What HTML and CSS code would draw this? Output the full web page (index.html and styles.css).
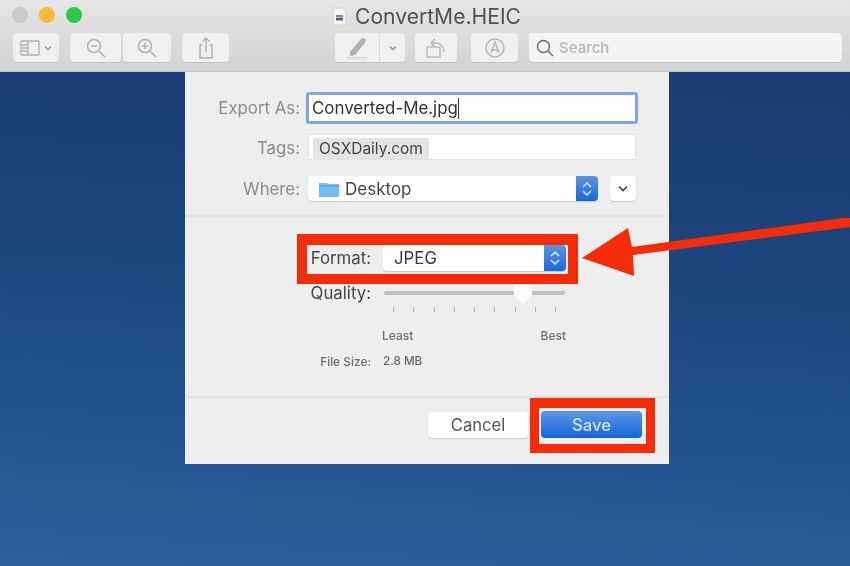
FILE: index.html
```html
<!DOCTYPE html>
<html lang="en">
<head>
<meta charset="utf-8">
<title>ConvertMe.HEIC</title>
<link rel="stylesheet" href="styles.css">
</head>
<body>
<div class="stage">
  <header class="chrome">
    <div class="titlebar">
      <div class="lights">
        <span class="light light-grey"></span>
        <span class="light light-yellow"></span>
        <span class="light light-green"></span>
      </div>
      <svg class="doc-icon" width="15" height="19" viewBox="0 0 15 19"><path d="M1 1h9l4 4v13H1z" fill="#f4f4f4" stroke="#d0d0d0"/><path d="M4 8h7v2.500H4z" fill="#7f8aa0"/><path d="M4 11h7v2.500H4z" fill="#5c6270"/></svg>
      <span class="title">ConvertMe.HEIC</span>
    </div>
    <div class="toolbar">
      <div class="tbtn tbtn-sidebar">
        <svg width="20" height="16" viewBox="0 0 20 16" fill="none" stroke="#b0b0b0" stroke-width="1.400"><rect x="1" y="1" width="18" height="14" rx="1"/><path d="M8 1v14M2 5h5M2 8h5M2 11h5"/></svg>
        <svg width="8" height="6" viewBox="0 0 8 6" fill="none" stroke="#9a9a9a" stroke-width="1.600"><path d="M1 1.500l3 3 3-3"/></svg>
      </div>
      <div class="tbtn tbtn-zoomout">
        <svg width="20" height="20" viewBox="0 0 20 20" fill="none" stroke="#b0b0b0" stroke-width="1.500"><circle cx="8" cy="8" r="6.500"/><path d="M5 8h6M13 13l6 6"/></svg>
      </div>
      <div class="tbtn tbtn-zoomin">
        <svg width="20" height="20" viewBox="0 0 20 20" fill="none" stroke="#b0b0b0" stroke-width="1.500"><circle cx="8" cy="8" r="6.500"/><path d="M5 8h6M8 5v6M13 13l6 6"/></svg>
      </div>
      <div class="tbtn tbtn-share">
        <svg width="16" height="22" viewBox="0 0 16 22" fill="none" stroke="#b0b0b0" stroke-width="1.400"><path d="M4.500 8H2v13h12V8h-2.500M8 15V1M4.500 4.500L8 1l3.500 3.500"/></svg>
      </div>
      <div class="tbtn tbtn-pen">
        <svg width="26" height="24" viewBox="0 0 26 24"><path d="M6 16L18 2l4 1-1 4-10 12-5 1z" fill="#b0b0b0"/><path d="M2 22h21" stroke="#c8c8c8"/></svg>
      </div>
      <div class="tbtn tbtn-penmenu">
        <svg width="8" height="6" viewBox="0 0 8 6" fill="none" stroke="#9a9a9a" stroke-width="1.600"><path d="M1 1.500l3 3 3-3"/></svg>
      </div>
      <div class="tbtn tbtn-rotate">
        <svg width="22" height="22" viewBox="0 0 22 22" fill="none" stroke="#b4b4b4" stroke-width="1.300"><rect x="2" y="10" width="13" height="10"/><path d="M19 15c0-5-3-9-8-9H7M10 2L6 6l4 4"/></svg>
      </div>
      <div class="tbtn tbtn-markup">
        <svg width="20" height="20" viewBox="0 0 20 20" fill="none" stroke="#b4b4b4" stroke-width="1.400"><circle cx="10" cy="10" r="9"/><path d="M6 15l4-11 4 11M6.500 14c0-3 7-3 7 0"/></svg>
      </div>
      <div class="search">
        <svg width="18" height="18" viewBox="0 0 18 18" fill="none" stroke="#6a6a6a" stroke-width="1.500"><circle cx="7.500" cy="7.500" r="6"/><path d="M12 12l5 5"/></svg>
        <span class="search-text">Search</span>
      </div>
    </div>
  </header>

  <main class="dialog">
    <div class="row row-export">
      <label class="label">Export As:</label>
      <div class="field field-focus"><span>Converted-Me.jpg</span><i class="caret"></i></div>
    </div>
    <div class="row row-tags">
      <label class="label label-tags">Tags:</label>
      <div class="field field-tags"><span class="tag">OSXDaily.com</span></div>
    </div>
    <div class="row row-where">
      <label class="label">Where:</label>
      <div class="popup popup-where">
        <svg class="folder" width="20" height="16" viewBox="0 0 20 16"><path d="M0 2h8l1 1h11v13H0z" fill="#72bdf5"/><path d="M0 5h20" stroke="#4f9fdc"/></svg>
        <span>Desktop</span>
        <span class="stepper">
          <svg width="10" height="16" viewBox="0 0 10 16" fill="none" stroke="#dbe9fb" stroke-width="1.500"><path d="M1 6l4-4 4 4M1 10l4 4 4-4"/></svg>
        </span>
      </div>
      <div class="expand">
        <svg width="10" height="7" viewBox="0 0 10 7" fill="none" stroke="#444" stroke-width="1.600"><path d="M1 1.500l4 4 4-4"/></svg>
      </div>
    </div>
    <hr class="divider divider-top">
    <div class="row row-format">
      <label class="label label-opt label-dark">Format:</label>
      <div class="popup popup-format">
        <span>JPEG</span>
        <span class="stepper">
          <svg width="10" height="16" viewBox="0 0 10 16" fill="none" stroke="#dbe9fb" stroke-width="1.500"><path d="M1 6l4-4 4 4M1 10l4 4 4-4"/></svg>
        </span>
      </div>
    </div>
    <div class="row row-quality">
      <label class="label label-opt label-dark">Quality:</label>
      <div class="slider">
        <div class="track"></div>
        <svg class="thumb" width="20" height="24" viewBox="0 0 20 24"><path d="M2 1h16a1 1 0 0 1 1 1v12l-9 9-9-9V2a1 1 0 0 1 1-1z" fill="#fbfbfb"/></svg>
      </div>
    </div>
    <div class="ticks">
      <i></i><i></i><i></i><i></i><i></i><i></i><i></i><i></i><i></i>
    </div>
    <div class="scale"><span>Least</span><span>Best</span></div>
    <div class="row row-size">
      <label class="label label-small">File Size:</label>
      <span class="size">2.8 MB</span>
    </div>
    <hr class="divider divider-bottom">
    <div class="actions">
      <button class="btn btn-cancel">Cancel</button>
      <button class="btn btn-save">Save</button>
    </div>
    <div class="mark mark-format"></div>
    <div class="mark mark-save"></div>
  </main>

  <svg class="arrow" width="270" height="70" viewBox="0 0 270 70"><path d="M2 40L48 10l4 19 218-30v10L53 37l1 21z" fill="#f52c0a"/></svg>
</div>
</body>
</html>
```
FILE: styles.css
```css
* { box-sizing: border-box; }
html, body { margin: 0; padding: 0; }
body { width: 850px; height: 566px; overflow: hidden; font-family: Inter, "Liberation Sans", sans-serif; }

.stage {
  position: relative;
  width: 850px;
  height: 566px;
  overflow: hidden;
  background: linear-gradient(184deg, #193a6c 0%, #1b4077 30%, #214d87 65%, #2e60a0 100%);
  filter: blur(0.5px);
}

.chrome {
  height: 72px;
  background: linear-gradient(180deg, #e6e6e6 0%, #d3d3d3 100%);
  border-bottom: 1px solid #c6c6c6;
  color: #555;
}
.titlebar { display: flex; align-items: center; height: 33px; padding-left: 12px; }
.lights { display: flex; gap: 11px; width: 320px; padding-bottom: 3px; }
.light { width: 16px; height: 16px; border-radius: 50%; }
.light-grey { background: #c9c9c9; }
.light-yellow { background: #f6bb3a; }
.light-green { background: #2dc84a; }
.doc-icon { margin-right: 8px; }
.title { font-size: 21.100px; color: #505050; }

.toolbar { display: flex; align-items: stretch; height: 29px; padding-left: 13px; }
.tbtn {
  display: flex;
  align-items: center;
  justify-content: center;
  gap: 4px;
  height: 29px;
  background: #f0f0f0;
  border-radius: 4px;
  box-shadow: 0 1px 0 #c4c4c4;
}
.tbtn-sidebar { width: 46px; margin-right: 11px; }
.tbtn-zoomout { width: 51px; margin-right: 2px; }
.tbtn-zoomin { width: 48px; margin-right: 11px; }
.tbtn-share { width: 47px; margin-right: 106px; }
.tbtn-pen { width: 44px; border-radius: 4px 0 0 4px; margin-right: 1px; }
.tbtn-penmenu { width: 25px; border-radius: 0 4px 4px 0; margin-right: 10px; }
.tbtn-rotate { width: 42px; margin-right: 14px; }
.tbtn-markup { width: 47px; margin-right: 11px; }
.search {
  display: flex;
  align-items: center;
  gap: 5px;
  width: 313px;
  padding-left: 7px;
  background: #f4f4f4;
  border-radius: 4px;
  box-shadow: 0 1px 0 #c4c4c4;
}
.search-text { font-size: 15px; color: #b5b5b5; font-weight: 500; }

.dialog {
  position: relative;
  width: 484px;
  height: 392px;
  margin-left: 185px;
  padding-top: 20px;
  background: #eeeeee;
  color: #8a8a8a;
}
.row { display: flex; align-items: center; }
.label { width: 115px; text-align: right; font-size: 16.800px; color: #8b8b8b; }
.label-tags { padding-top: 2px; }
.label-opt { width: 186px; }
.label-dark { color: #45454a; }
.label-small { width: 186px; font-size: 11.900px; color: #6e6e6e; font-weight: 500; }

.row-export { height: 32px; }
.field { display: flex; align-items: center; background: #fff; color: #333; }
.field-focus {
  width: 332px;
  height: 32px;
  margin-left: 6px;
  padding-left: 3px;
  border: 3px solid #7ea6e0;
  border-radius: 3px;
  font-size: 16.900px;
}
.caret { width: 1px; height: 21px; margin-left: 0; background: #333; }
.row-tags { height: 26px; margin-top: 10px; }
.field-tags {
  width: 328px;
  height: 26px;
  margin-left: 8px;
  padding: 2px 0 0 4px;
  border: 1px solid #e2e2e2;
}
.tag { padding: 1px 6px; background: #e4e4e4; border-radius: 2px; font-size: 15.500px; color: #444; }
.row-where { height: 25px; margin-top: 16px; }
.popup {
  display: flex;
  align-items: center;
  position: relative;
  background: #fff;
  border-radius: 4px;
  box-shadow: 0 1px 1px #c6c6c6;
  color: #444;
}
.popup-where { width: 290px; height: 25px; margin-left: 8px; padding-left: 11px; gap: 6px; font-size: 17px; }
.stepper {
  position: absolute;
  right: 0;
  top: 0;
  bottom: 0;
  width: 22px;
  display: flex;
  align-items: center;
  justify-content: center;
  border-radius: 0 4px 4px 0;
  background: linear-gradient(180deg, #5d94dc 0%, #1a68e0 100%);
}
.expand {
  display: flex;
  align-items: center;
  justify-content: center;
  width: 26px;
  height: 25px;
  margin-left: 12px;
  background: #fff;
  border-radius: 4px;
  box-shadow: 0 1px 1px #c6c6c6;
}
.divider { height: 2px; margin: 0; border: 0; background: #e4e4e4; }
.divider-top { margin-top: 14px; }
.row-format { height: 26px; margin-top: 28px; }
.popup-format { width: 183px; height: 26px; margin-left: 12px; padding-left: 11px; font-size: 16.800px; color: #3a3a3a; }
.row-quality { height: 18px; margin-top: 13px; }
.slider { position: relative; width: 181px; height: 18px; margin-left: 13px; }
.track { position: absolute; left: 0; right: 0; top: 7px; height: 4px; border-radius: 2px; background: #c0c0c0; }
.thumb { position: absolute; left: 129px; top: -3px; }
.ticks { display: flex; justify-content: space-between; width: 163px; margin: 5px 0 0 208px; }
.ticks i { width: 1px; height: 5px; background: #b0b0b0; }
.scale {
  display: flex;
  justify-content: space-between;
  width: 184px;
  height: 14px;
  line-height: 14px;
  margin: 17px 0 0 197px;
  font-size: 12px;
  font-weight: 500;
  color: #707070;
}
.row-size { height: 14px; margin-top: 11px; }
.size { margin-left: 12px; font-size: 11.700px; font-weight: 500; color: #666; }
.divider-bottom { margin-top: 28px; }
.actions { display: flex; align-items: flex-end; gap: 13px; height: 27px; margin: 13px 0 0 243px; }
.btn { border: 0; font-family: inherit; font-size: 16.600px; border-radius: 4px; padding: 0; }
.btn-cancel { width: 100px; height: 26px; background: #fff; color: #555; box-shadow: 0 1px 1px #c6c6c6; }
.btn-save { width: 101px; height: 27px; background: linear-gradient(180deg, #5e97e2 0%, #1465e0 100%); color: #cfe2f8; font-weight: 500; }

.mark { position: absolute; border-style: solid; border-color: #f52c0a; pointer-events: none; }
.mark-format { left: 112px; top: 162px; width: 281px; height: 50px; border-width: 11px 10px 10px; }
.mark-save { left: 345px; top: 326px; width: 125px; height: 55px; border-width: 10px 9px 9px; }

.arrow { position: absolute; left: 580px; top: 218px; }
```
